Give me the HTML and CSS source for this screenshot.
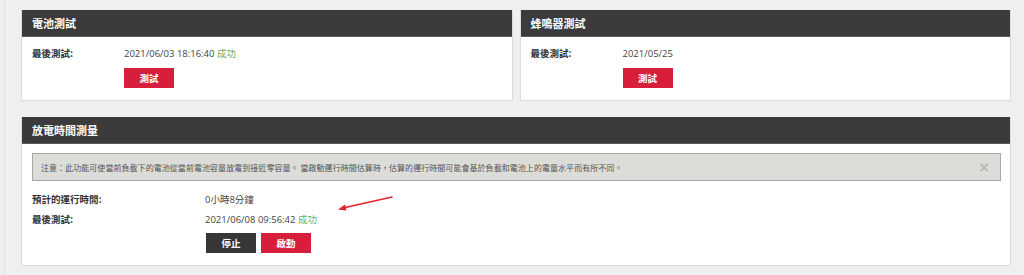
FILE: index.html
```html
<!DOCTYPE html>
<html lang="zh-Hant">
<head>
<meta charset="utf-8">
<link rel="stylesheet" href="styles.css">
</head>
<body>
<div class="page">
  <div class="row-top">
    <section class="panel">
      <h2 class="panel-head">電池測試</h2>
      <div class="panel-body">
        <div class="field"><span class="label">最後測試:</span><span class="value">2021/06/03 18:16:40 <span class="ok">成功</span></span></div>
        <div class="actions"><button class="btn btn-red">測試</button></div>
      </div>
    </section>
    <section class="panel">
      <h2 class="panel-head">蜂鳴器測試</h2>
      <div class="panel-body">
        <div class="field"><span class="label">最後測試:</span><span class="value">2021/05/25</span></div>
        <div class="actions"><button class="btn btn-red">測試</button></div>
      </div>
    </section>
  </div>
  <section class="panel panel-wide">
    <h2 class="panel-head">放電時間測量</h2>
    <div class="panel-body">
      <div class="alert">
        <span class="alert-text">注意：此功能可使當前負載下的電池從當前電池容量放電到接近零容量。 當啟動運行時間估算時，估算的運行時間可能會基於負載和電池上的電量水平而有所不同。</span>
        <span class="alert-close">×</span>
      </div>
      <div class="field wide"><span class="label">預計的運行時間:</span><span class="value">0小時8分鐘</span></div>
      <div class="field wide"><span class="label">最後測試:</span><span class="value">2021/06/08 09:56:42 <span class="ok">成功</span></span></div>
      <div class="actions wide"><button class="btn btn-dark">停止</button><button class="btn btn-red">啟動</button></div>
    </div>
    <svg class="arrow" width="60" height="20" viewBox="0 0 60 20">
      <line x1="57" y1="2" x2="8" y2="13" stroke="#e3232b" stroke-width="1.6" stroke-linecap="round"/>
      <polygon points="3,14.5 10,9.5 11.5,15.5" fill="#e3232b"/>
    </svg>
  </section>
</div>
</body>
</html>
```
FILE: styles.css
```css
* { box-sizing: border-box; }
html, body { margin: 0; padding: 0; }
body {
  background: #efefef;
  width: 1024px;
  height: 275px;
  overflow: hidden;
  font-family: "Open Sans", "Noto Sans CJK TC", sans-serif;
  color: #333;
}
.page {
  margin-left: 4px;
  border-left: 1px solid #e2e2e2;
  height: 275px;
  padding: 10px 13px 0 16px;
  display: flex;
  flex-direction: column;
  gap: 16px;
}
.row-top {
  display: flex;
  gap: 7px;
}
.row-top .panel { flex: 1 1 0; }
.panel {
  background: #fff;
  border: 1px solid #dcdcdc;
  border-top: none;
  position: relative;
}
.panel-head {
  margin: 0;
  height: 27px;
  background: #3b3b3b;
  border-bottom: 1px solid #5a5a5a;
  color: #fff;
  font-family: "Noto Sans CJK TC", sans-serif;
  font-size: 11px;
  font-weight: 700;
  line-height: 26px;
  padding-left: 10px;
}
.panel-body {
  padding: 8px 10px 12px 10px;
}
.field {
  display: flex;
  align-items: center;
  height: 16px;
  font-size: 9.5px;
}
.label {
  width: 92px;
  flex: none;
  font-family: "Noto Sans CJK TC", sans-serif;
  font-weight: 700;
  color: #333;
}
.value {
  color: #444;
  font-family: "Open Sans", "Noto Sans CJK TC", sans-serif;
}
.ok {
  color: #66b066;
  font-family: "Noto Sans CJK TC", sans-serif;
}
.actions {
  display: flex;
  gap: 5px;
  padding-left: 92px;
  margin-top: 7px;
}
.btn {
  width: 50px;
  height: 20px;
  border: none;
  padding: 0;
  color: #fff;
  font-family: "Noto Sans CJK TC", sans-serif;
  font-size: 9.5px;
  font-weight: 700;
  cursor: pointer;
}
.btn-red { background: #d71e3b; }
.btn-dark { background: #363636; }
.panel-wide .panel-body { padding-top: 9px; padding-right: 9px; }
.alert {
  display: flex;
  align-items: center;
  justify-content: space-between;
  height: 28px;
  background: #dcdcd8;
  border: 1px solid #a8a8a8;
  padding: 0 10px 0 8px;
  margin-bottom: 8px;
}
.alert-text {
  font-family: "Noto Sans CJK TC", sans-serif;
  font-size: 8px;
  letter-spacing: 0.05px;
  color: #555;
}
.alert-close {
  color: #b5b5b5;
  font-size: 14px;
  font-weight: 700;
  font-family: "DejaVu Sans", sans-serif;
  line-height: 1;
}
.field.wide { height: 20px; }
.field.wide .label { width: 173px; }
.actions.wide { padding-left: 174px; margin-top: 4px; }
.arrow {
  position: absolute;
  left: 313px;
  top: 78px;
}
```
